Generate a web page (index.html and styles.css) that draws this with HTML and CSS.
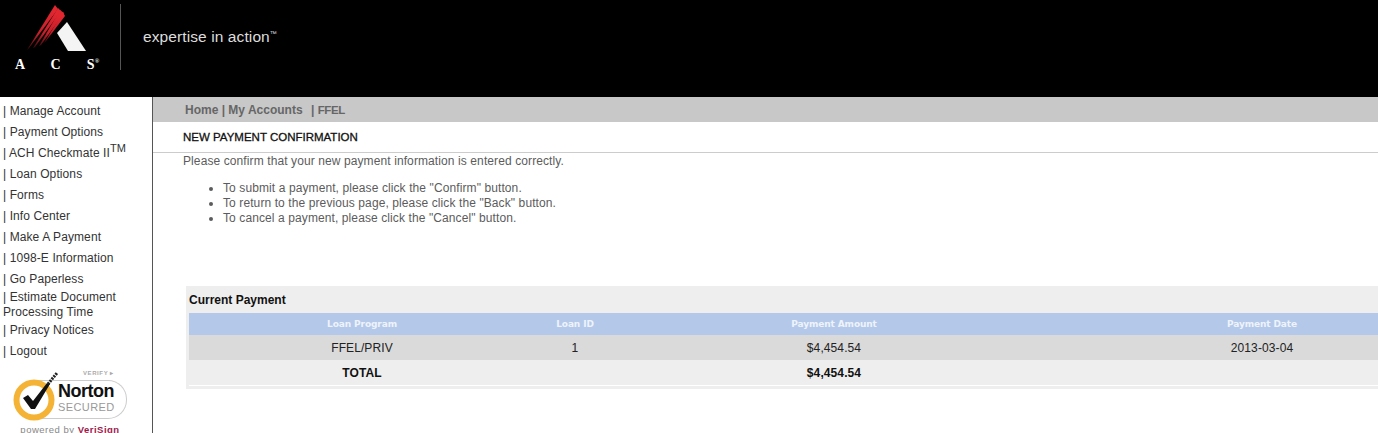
FILE: index.html
```html
<!DOCTYPE html>
<html lang="en">

<head>
    <meta charset="utf-8">
    <title>New Payment Confirmation</title>
    <link rel="stylesheet" href="styles.css">
</head>

<body>
    <header class="top">
        <div class="logo">
            <svg width="100" height="56" viewBox="0 0 100 56">
                <defs>
                    <linearGradient id="fade" x1="0.75" y1="0.1" x2="0.1" y2="1">
                        <stop offset="0" stop-color="#e0262f"/>
                        <stop offset="0.6" stop-color="#c4202a"/>
                        <stop offset="1" stop-color="#4c0c12"/>
                    </linearGradient>
                </defs>
                <!-- red streaks -->
                <path d="M45 5 L48 9 L19 48 L17 50 Z" fill="url(#fade)"/>
                <path d="M48 8 L51 11 L25 47 L23 48 Z" fill="url(#fade)"/>
                <path d="M50 10 L54 13 L31 45 L29 46 Z" fill="url(#fade)"/>
                <path d="M53 12 L55 16 L36 41 L34 43 Z" fill="url(#fade)"/>
                <!-- white wedge -->
                <path d="M57 22 L76 51 L58 51 L47 33 Z" fill="#f4f4f4"/>
            </svg>
            <div class="acs">A C S<sup>®</sup></div>
        </div>
        <div class="divider"></div>
        <div class="tagline">expertise in action<sup>™</sup></div>
    </header>

    <div class="page">
        <nav class="side">
            <a class="item">| Manage Account</a>
            <a class="item">| Payment Options</a>
            <a class="item">| ACH Checkmate II<sup>TM</sup></a>
            <a class="item">| Loan Options</a>
            <a class="item">| Forms</a>
            <a class="item">| Info Center</a>
            <a class="item">| Make A Payment</a>
            <a class="item">| 1098-E Information</a>
            <a class="item">| Go Paperless</a>
            <a class="item wrap">| Estimate Document Processing Time</a>
            <a class="item">| Privacy Notices</a>
            <a class="item">| Logout</a>

            <div class="norton">
                <div class="verify">VERIFY ▸</div>
                <div class="seal">
                    <svg class="check" width="62" height="58" viewBox="0 0 62 58">
                        <circle cx="25" cy="33" r="17.5" fill="none" stroke="#f5b335" stroke-width="6"/>
                        <path d="M14 31 L19 28 L24 34 L38 16 L41 17 L26 42 L22 42 Z" fill="#111"/>
                        <path d="M39 17 L48 6" stroke="#222" stroke-width="3" stroke-dasharray="2 1"/>
                    </svg>
                    <div class="pill">
                        <div class="norton-name">Norton</div>
                        <div class="secured">SECURED</div>
                    </div>
                </div>
                <div class="powered">powered by <b>VeriSign</b></div>
            </div>
        </nav>

        <main class="main">
            <div class="crumbs">Home | My Accounts <span class="last">| <span class="ffel">FFEL</span></span></div>
            <h1 class="title">NEW PAYMENT CONFIRMATION</h1>
            <p class="intro">Please confirm that your new payment information is entered correctly.</p>
            <ul class="steps">
                <li>To submit a payment, please click the "Confirm" button.</li>
                <li>To return to the previous page, please click the "Back" button.</li>
                <li>To cancel a payment, please click the "Cancel" button.</li>
            </ul>

            <section class="box">
                <h2>Current Payment</h2>
                <table class="pay">
                    <tr>
                        <th class="c1">Loan Program</th>
                        <th class="c2">Loan ID</th>
                        <th class="c3">Payment Amount</th>
                        <th class="c4">Payment Date</th>
                    </tr>
                    <tr class="row">
                        <td>FFEL/PRIV</td>
                        <td>1</td>
                        <td>$4,454.54</td>
                        <td>2013-03-04</td>
                    </tr>
                    <tr class="total">
                        <td>TOTAL</td>
                        <td></td>
                        <td>$4,454.54</td>
                        <td></td>
                    </tr>
                </table>
            </section>
        </main>
    </div>
</body>

</html>
```

FILE: styles.css
```css
html, body {
    height: 433px;
    overflow: hidden;
}

body {
    margin: 0;
    font-family: "Liberation Sans", Arial, sans-serif;
    font-size: 12px;
    letter-spacing: 0.1px;
    color: #5c5c5c;
    background-color: white;
}

.top {
    height: 97px;
    background-color: black;
    display: flex;
    align-items: flex-start;
}

.logo {
    width: 120px;
    padding-left: 10px;
    box-sizing: border-box;
}

.logo svg {
    display: block;
}

.acs {
    margin-top: 2px;
    padding-left: 5px;
    color: white;
    font-family: "Liberation Serif", serif;
    font-weight: bold;
    font-size: 14px;
    word-spacing: 22.5px;
    line-height: 14px;
    white-space: nowrap;
}

.acs sup {
    font-size: 6px;
    line-height: 0;
}

.divider {
    width: 1px;
    height: 66px;
    margin-top: 4px;
    background-color: #555;
}

.tagline {
    margin: 25px 0 0 22px;
    color: #ddd;
    font-size: 15.5px;
    line-height: 18px;
}

.tagline sup {
    font-size: 7px;
}

.page {
    display: flex;
    height: 336px;
}

.side {
    width: 149px;
    flex: none;
    border-right: 1px solid #555;
    padding: 4px 0 0 3px;
    color: #333;
}

.item {
    display: block;
    height: 21px;
    line-height: 21px;
    white-space: nowrap;
}

.item sup {
    font-size: 11px;
    line-height: 0;
}

.wrap {
    height: 30px;
    line-height: 15px;
    white-space: normal;
}

.norton {
    width: 125px;
    margin-top: 8px;
    margin-left: 6px;
    position: relative;
}

.verify {
    text-align: right;
    padding-right: 20px;
    color: #aaa;
    font-size: 6px;
    font-weight: bold;
    letter-spacing: 0.6px;
    line-height: 7px;
}

.seal {
    display: flex;
    align-items: center;
    height: 41px;
    margin-top: 2px;
}

.pill {
    margin-left: 24px;
    padding: 1px 0 0 25px;
    width: 94px;
    height: 39px;
    box-sizing: border-box;
    border: 1px solid #ccc;
    border-left: none;
    border-radius: 0 19px 19px 0;
}

.check {
    position: absolute;
    left: 0;
    top: -3px;
}

.norton-name {
    color: #111;
    font-size: 18px;
    font-weight: bold;
    line-height: 19px;
    letter-spacing: -0.5px;
}

.secured {
    color: #999;
    font-size: 11px;
    line-height: 13px;
    letter-spacing: 0.4px;
}

.powered {
    margin-top: 4px;
    margin-left: -3px;
    text-align: center;
    color: #888;
    font-size: 9.5px;
    letter-spacing: 0.5px;
    line-height: 11px;
}

.powered b {
    color: #9a1b4b;
}

.main {
    flex: 1;
    min-width: 0;
    overflow: hidden;
}

.crumbs {
    height: 25px;
    line-height: 26px;
    padding-left: 32px;
    background-color: #c8c8c8;
    color: #666;
    font-weight: bold;
    letter-spacing: 0;
}

.last {
    margin-left: 5px;
}

.ffel {
    font-size: 11.5px;
    letter-spacing: -0.4px;
}

.title {
    margin: 0;
    height: 30px;
    line-height: 30px;
    padding-left: 30px;
    font-size: 11.5px;
    letter-spacing: 0;
    color: #111;
    border-bottom: 1px solid #ccc;
    font-weight: normal;
    -webkit-text-stroke: 0.3px #111;
}

.intro {
    margin: 0;
    padding-left: 30px;
    line-height: 16px;
}

.steps {
    margin: 12px 0 0 0;
    padding-left: 70px;
    line-height: 15px;
}

/* table runs on past the right edge of the window */
.box {
    width: 1290px;
    margin: 60px 0 0 33px;
    background-color: #eee;
    padding-bottom: 3px;
}

.box h2 {
    margin: 0;
    height: 27px;
    line-height: 28px;
    padding-left: 3px;
    font-size: 12px;
    color: #111;
    font-weight: bold;
    letter-spacing: 0;
}

.pay {
    width: 1282px;
    table-layout: fixed;
    margin-left: 3px;
    border-collapse: collapse;
    text-align: center;
    color: #222;
}

.pay th {
    height: 22px;
    padding: 0;
    background-color: #b4c9e9;
    color: #eef3fb;
    font-family: "DejaVu Sans", sans-serif;
    font-size: 9px;
    letter-spacing: -0.1px;
}

.c1 { width: 346px; }
.c2 { width: 80px; }
.c3 { width: 438px; }
.c4 { width: 418px; }

.row td {
    height: 25px;
    padding: 0;
    background-color: #dadada;
}

.total td {
    height: 25px;
    padding: 0;
    background-color: #eee;
    font-weight: bold;
    color: #111;
}

.total {
    border-bottom: 1px solid white;
}
```
